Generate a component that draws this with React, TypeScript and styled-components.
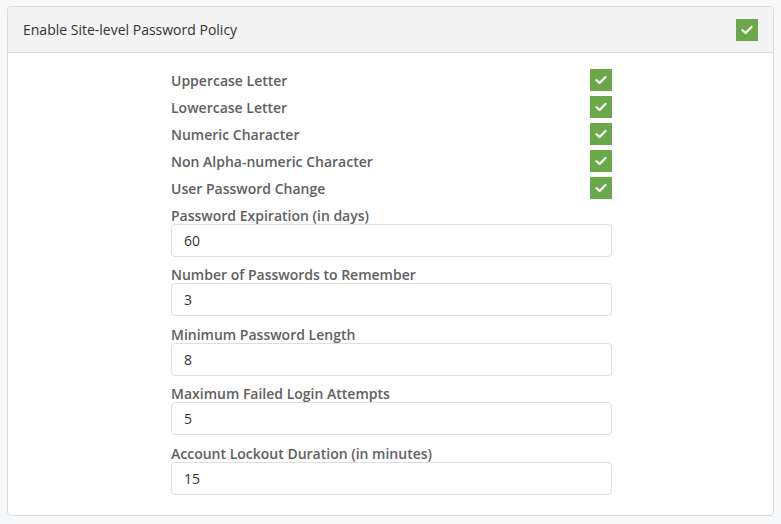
import React from "react";
import styled, { createGlobalStyle } from "styled-components";

const GlobalStyle = createGlobalStyle`
  body {
    margin: 0;
    background: #f7f8fa;
    font-family: "Open Sans", "Liberation Sans", sans-serif;
  }
`;

const checks = [
  "Uppercase Letter",
  "Lowercase Letter",
  "Numeric Character",
  "Non Alpha-numeric Character",
  "User Password Change",
];

const fields = [
  { label: "Password Expiration (in days)", value: "60" },
  { label: "Number of Passwords to Remember", value: "3" },
  { label: "Minimum Password Length", value: "8" },
  { label: "Maximum Failed Login Attempts", value: "5" },
  { label: "Account Lockout Duration (in minutes)", value: "15" },
];

const CheckBox = () => (
  <Box>
    <svg width="12" height="10" viewBox="0 0 12 10">
      <path
        d="M1.5 5.2 L4.6 8 L10.5 2"
        fill="none"
        stroke="#fff"
        strokeWidth="2.2"
        strokeLinecap="round"
        strokeLinejoin="round"
      />
    </svg>
  </Box>
);

const App = () => {
  return (
    <Page>
      <GlobalStyle />
      <Card>
        <Header>
          <Title>Enable Site-level Password Policy</Title>
          <CheckBox />
        </Header>
        <Body>
          <Form>
            <CheckList>
              {checks.map((c) => (
                <CheckRow key={c}>
                  <Label>{c}</Label>
                  <CheckBox />
                </CheckRow>
              ))}
            </CheckList>
            {fields.map((f) => (
              <Field key={f.label}>
                <Label>{f.label}</Label>
                <Input defaultValue={f.value} />
              </Field>
            ))}
          </Form>
        </Body>
      </Card>
    </Page>
  );
};

const Page = styled.div`
  padding: 6px 7px 8px 7px;
`;

const Card = styled.div`
  background: #fff;
  border: 1px solid #dcdcdc;
  border-radius: 4px;
  overflow: hidden;
`;

const Header = styled.div`
  display: flex;
  align-items: center;
  justify-content: space-between;
  height: 45px;
  padding: 0 15px;
  background: #f4f4f4;
  border-bottom: 1px solid #dcdcdc;
`;

const Title = styled.span`
  font-size: 14px;
  color: #333;
`;

const Box = styled.span`
  display: inline-flex;
  align-items: center;
  justify-content: center;
  width: 22px;
  height: 22px;
  background: #6aa84a;
  flex-shrink: 0;
`;

const Body = styled.div`
  display: flex;
  justify-content: center;
  padding: 16px 0 20px 2px;
`;

const Form = styled.div`
  width: 441px;
  display: flex;
  flex-direction: column;
  gap: 9.5px;
`;

const CheckList = styled.div`
  display: flex;
  flex-direction: column;
  gap: 5px;
  margin-bottom: -2px;
`;

const CheckRow = styled.div`
  display: flex;
  align-items: center;
  justify-content: space-between;
  height: 22px;
`;

const Label = styled.span`
  font-size: 14px;
  font-weight: 600;
  color: #606060;
  line-height: 17px;
`;

const Field = styled.div`
  display: flex;
  flex-direction: column;
`;

const Input = styled.input`
  box-sizing: border-box;
  height: 33px;
  width: 100%;
  padding: 0 12px;
  border: 1px solid #dedede;
  border-radius: 4px;
  font-family: "Open Sans", "Liberation Sans", sans-serif;
  font-size: 14px;
  color: #333;
  outline: none;
`;

export default App;
